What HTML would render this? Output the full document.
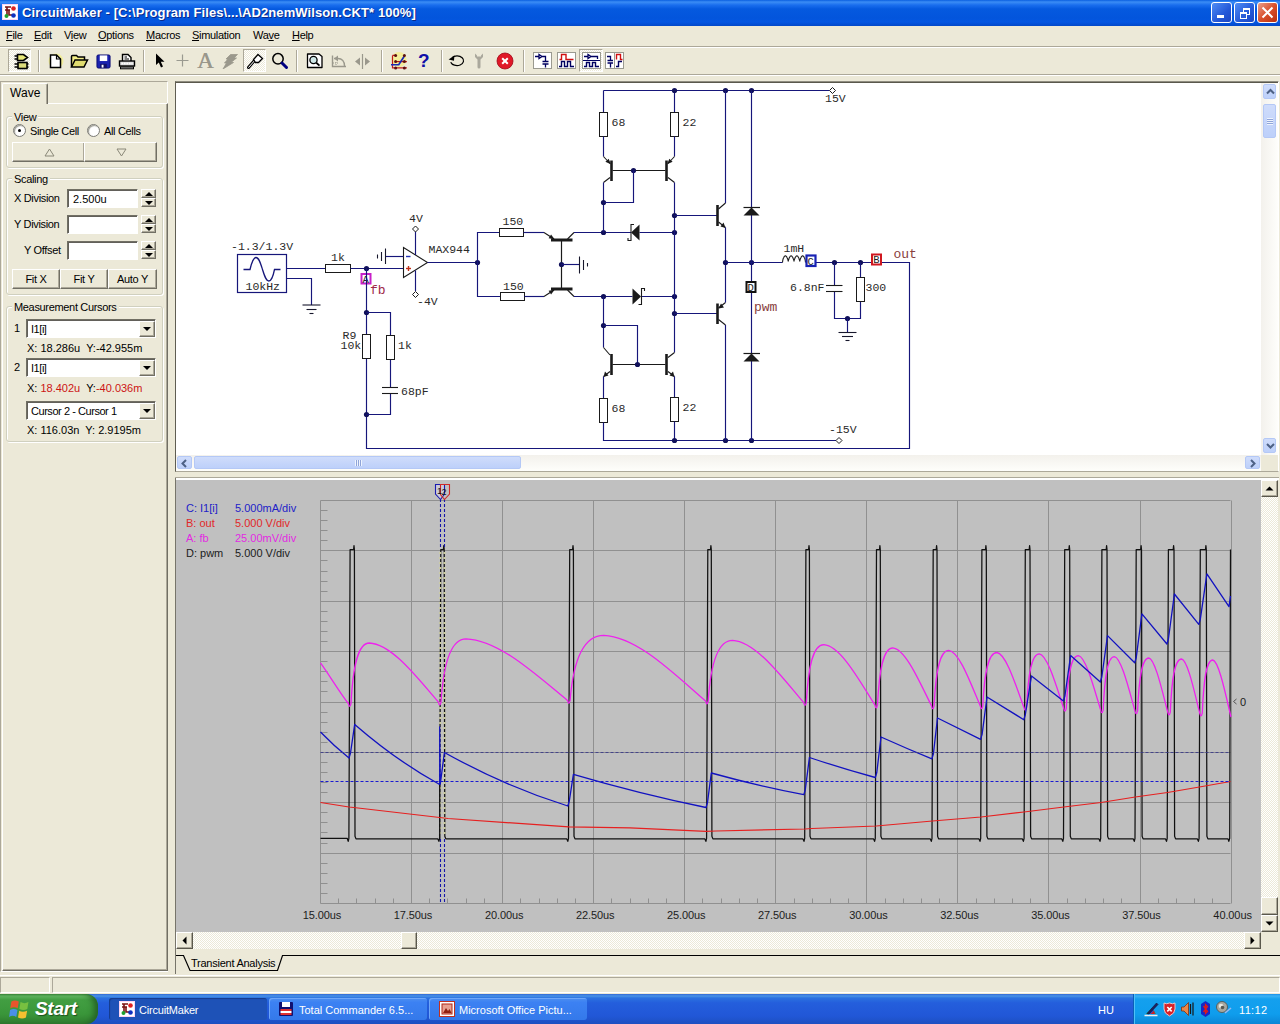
<!DOCTYPE html>
<html lang="en"><head><meta charset="utf-8"><title>CircuitMaker</title>
<style>
html,body{margin:0;padding:0;}
body{width:1280px;height:1024px;overflow:hidden;background:#ece9d8;position:relative;font-family:"Liberation Sans",sans-serif;font-size:11px;color:#000;}
.a{position:absolute;}
.t{position:absolute;white-space:nowrap;line-height:13px;height:13px;}
#title{left:0;top:0;width:1280px;height:26px;background:linear-gradient(#0a5fe0 0,#3b8df5 2px,#1a6eee 5px,#0559df 9px,#0355dc 18px,#0456e2 22px,#0349c9 26px);}
#title .tt{left:22px;top:5px;color:#fff;font-weight:bold;font-size:13px;line-height:15px;height:15px;letter-spacing:0.09px;text-shadow:1px 1px 0 #0a2a8a;}
.cb{position:absolute;top:2px;width:19px;height:19px;border:1px solid #fff;border-radius:3px;background:linear-gradient(135deg,#4f8df5,#2458d8 60%,#1c46c2);box-sizing:content-box;}
#menu{left:0;top:26px;width:1280px;height:20px;background:#ece9d8;}
#menu .t{top:3px;font-size:11px;letter-spacing:-0.3px;}
.ls{letter-spacing:-0.33px;}
u{text-decoration:underline;}
.hl{position:absolute;height:1px;}
.vl{position:absolute;width:1px;}
.sep{position:absolute;top:50px;width:1px;height:22px;background:#aca899;border-right:1px solid #fff;}
.grp{position:absolute;border:1px solid #d0d0bf;border-radius:3px;box-shadow:inset 1px 1px 0 #fff, 1px 1px 0 #fff;}
.grp>span{position:absolute;top:-6px;left:5px;letter-spacing:-0.33px;background:#ece9d8;padding:0 2px;line-height:13px;}
.btn{position:absolute;letter-spacing:-0.3px;background:#ece9d8;border:1px solid;border-color:#fff #716f64 #716f64 #fff;box-shadow:inset -1px -1px 0 #aca899;text-align:center;line-height:19px;box-sizing:border-box;}
.inp{position:absolute;background:#fff;border:1px solid;border-color:#716f64 #fff #fff #716f64;box-shadow:inset 1px 1px 0 #62605a;box-sizing:border-box;}
.spin{position:absolute;width:15px;height:9px;background:#ece9d8;border:1px solid;border-color:#fff #716f64 #716f64 #fff;box-shadow:inset -1px -1px 0 #aca899;box-sizing:border-box;}
.spin i{position:absolute;left:3px;top:2px;width:0;height:0;border-left:4px solid transparent;border-right:4px solid transparent;}
.spin i.up{border-bottom:4px solid #000;}
.spin i.dn{border-top:4px solid #000;}
.dd{position:absolute;width:16px;height:16px;background:#ece9d8;border:1px solid;border-color:#fff #716f64 #716f64 #fff;box-shadow:inset -1px -1px 0 #aca899;box-sizing:border-box;}
.dd i{position:absolute;left:3px;top:5px;width:0;height:0;border-left:4px solid transparent;border-right:4px solid transparent;border-top:4px solid #000;}
.radio{position:absolute;width:11px;height:11px;border-radius:50%;background:#fff;border:1px solid #7b7b75;box-shadow:inset 1px 1px 1px #9a9a90;box-sizing:content-box;}
.tb{position:absolute;top:994px;height:30px;}
.tk{position:absolute;top:998px;height:22px;border-radius:3px;color:#fff;font-size:11px;}
.tk span{position:absolute;top:6px;left:30px;white-space:nowrap;line-height:13px;}
.csb{position:absolute;background:#ece9d8;border:1px solid;border-color:#fff #5a584c #5a584c #fff;box-shadow:inset -1px -1px 0 #aca899;box-sizing:border-box;}
.xsb{position:absolute;box-sizing:border-box;border:1px solid #b4c8f6;border-radius:2px;background:linear-gradient(#cfdcfb,#bdd0fa);}
</style></head>
<body>
<div class="a" id="title">
<svg class="a" style="left:2px;top:4px" width="16" height="16" viewBox="0 0 16 16"><rect width="16" height="16" fill="#fbd5f3"/><rect x="1" y="1" width="14" height="14" fill="#fff"/><path d="M3 3H9M5 3V11M3 6H8M7 6V11H12" stroke="#7a1212" stroke-width="1.6" fill="none"/><circle cx="11.5" cy="4.5" r="2.3" fill="#e02020"/><circle cx="11.5" cy="11.5" r="2.3" fill="#1030c0"/><circle cx="4.5" cy="12" r="2" fill="#20a030"/></svg>
<div class="t tt">CircuitMaker - [C:\Program Files\...\AD2nemWilson.CKT* 100%]</div>
<div class="cb" style="left:1211px"><div class="a" style="left:5px;top:12px;width:7px;height:3px;background:#fff"></div></div>
<div class="cb" style="left:1234px"><div class="a" style="left:8px;top:5px;width:5px;height:4px;border:1px solid #fff;border-top-width:2px"></div><div class="a" style="left:5px;top:9px;width:5px;height:4px;border:1px solid #fff;border-top-width:2px;background:#2d5fd9"></div></div>
<div class="cb" style="left:1257px;background:linear-gradient(135deg,#e9a08c,#d9502c 50%,#b8300f)"><svg class="a" style="left:3px;top:3px" width="13" height="13"><path d="M1.500 1.500L11.500 11.500M11.500 1.500L1.500 11.500" stroke="#fff" stroke-width="2"/></svg></div>
</div>
<div class="a" id="menu">
<div class="t" style="left:6px"><u>F</u>ile</div>
<div class="t" style="left:34px"><u>E</u>dit</div>
<div class="t" style="left:64px">V<u>i</u>ew</div>
<div class="t" style="left:98px"><u>O</u>ptions</div>
<div class="t" style="left:146px"><u>M</u>acros</div>
<div class="t" style="left:192px"><u>S</u>imulation</div>
<div class="t" style="left:253px">Wa<u>v</u>e</div>
<div class="t" style="left:292px"><u>H</u>elp</div>
</div>
<div class="hl" style="left:0;top:46px;width:1280px;background:#aca899"></div>
<div class="hl" style="left:0;top:47px;width:1280px;background:#fff"></div>
<div class="hl" style="left:0;top:74px;width:1280px;background:#aca899"></div>
<div class="hl" style="left:0;top:75px;width:1280px;background:#fff"></div>
<div class="a" style="left:8px;top:49px;width:23px;height:23px;background:repeating-conic-gradient(#fff 0% 25%,#ece9d8 0% 50%) 0 0/2px 2px;border:1px solid;border-color:#aca899 #fff #fff #aca899;box-sizing:border-box"></div>
<svg class="a" style="left:8.5px;top:47px" width="24" height="24" viewBox="0 0 24 24"><path d="M8.5 7.5H14.5L18.5 10.5L14.5 13.5H8.5Z" fill="#e8e878" stroke="#000" stroke-width="1.6"/><path d="M5.500 9H9M5.500 12H9" stroke="#000" stroke-width="1.300"/><rect x="9" y="15.5" width="9" height="6" fill="#dcdc7c" stroke="#000" stroke-width="1.6"/><path d="M5.500 17H9M5.500 20H9M18 17H19.500M18 20H19.500" stroke="#000" stroke-width="1.300"/></svg>
<div class="sep" style="left:38px"></div>
<div class="sep" style="left:143px"></div>
<div class="sep" style="left:296px"></div>
<div class="sep" style="left:381px"></div>
<div class="sep" style="left:441px"></div>
<div class="sep" style="left:523px"></div>
<svg class="a" style="left:47px;top:52px" width="18" height="18" viewBox="0 0 18 18"><circle cx="9" cy="9" r="7.5" fill="#f5f06a" opacity=".55"/><path d="M3.5 3H9.5L13.5 7V15.5H3.5Z" fill="#fff" stroke="#000" stroke-width="1.5"/><path d="M9.5 3V7H13.5" fill="none" stroke="#000" stroke-width="1.2"/></svg>
<svg class="a" style="left:70px;top:52px" width="20" height="18" viewBox="0 0 20 18"><path d="M1.5 15V4.5Q1.5 3.5 2.5 3.5H6.5L8 5H14.5V8" fill="#f3ee86" stroke="#000" stroke-width="1.5"/><path d="M1.5 15L5 8H17.5L14 15Z" fill="#e0dc70" stroke="#000" stroke-width="1.5"/></svg>
<svg class="a" style="left:95.500px;top:53.500px" width="15" height="15" viewBox="0 0 16 16"><rect x="1" y="1" width="14" height="14" rx="1.500" fill="#1a22b0" stroke="#0a0a70" stroke-width="1"/><rect x="4" y="1.5" width="8" height="6" fill="#fff"/><rect x="4.5" y="10.5" width="7" height="4.5" fill="#10106a"/><rect x="6" y="11.5" width="2" height="3" fill="#fff"/></svg>
<svg class="a" style="left:118px;top:52px" width="18" height="18" viewBox="0 0 18 18"><path d="M4.5 9V2.5H10L13 5.5V9" fill="#fff" stroke="#000" stroke-width="1.4"/><path d="M6.5 5H9M6.5 7H11" stroke="#000" stroke-width="1"/><rect x="1.5" y="9" width="15" height="5" fill="#ddd" stroke="#000" stroke-width="1.4"/><path d="M3.5 11.5H14.5" stroke="#fff" stroke-width="1.4" stroke-dasharray="1.5 1"/><rect x="2.5" y="15" width="13" height="1.8" fill="#c8c8c8" stroke="#000" stroke-width="1"/></svg>
<svg class="a" style="left:154px;top:52px" width="14" height="18" viewBox="0 0 14 18"><path d="M2 1.5V13L4.8 10.5L7 15.5L9 14.6L6.8 9.8H10.5Z" fill="#000"/></svg>
<svg class="a" style="left:176px;top:54px" width="14" height="14"><path d="M6.5 0.5V12.5M0.5 6.5H12.5" stroke="#9a9a90" stroke-width="1.2"/></svg>
<div class="t" style="left:197px;top:49px;font-family:'Liberation Serif',serif;font-size:23px;line-height:24px;height:24px;color:#99978b;text-shadow:0.4px 0 0 #99978b">A</div>
<svg class="a" style="left:222px;top:53px" width="16" height="16" viewBox="0 0 16 16"><path d="M8.500 1.500H15.500L12 5H14.500L9 9.500H11.500L1 16L4.500 10H2.500L6 6H4Z" fill="#9a988c" stroke="#9a988c" stroke-width=".8" stroke-linejoin="round"/></svg>
<div class="a" style="left:243px;top:49px;width:23px;height:23px;background:repeating-conic-gradient(#fff 0% 25%,#ece9d8 0% 50%) 0 0/2px 2px;border:1px solid;border-color:#aca899 #fff #fff #aca899;box-sizing:border-box"></div>
<svg class="a" style="left:246px;top:52px" width="18" height="18" viewBox="0 0 18 18"><path d="M2.5 15.5L8.5 8.5" stroke="#000" stroke-width="3" stroke-linecap="round"/><path d="M2.7 15.3L8.5 8.7" stroke="#fff" stroke-width="1" stroke-linecap="round"/><path d="M7.5 7.5L12 2.5L16.5 6.5L12.5 10.5L9.5 10.5Z" fill="#fff" stroke="#000" stroke-width="1.3"/></svg>
<svg class="a" style="left:271px;top:52px" width="18" height="18" viewBox="0 0 18 18"><circle cx="7" cy="6.8" r="5.2" fill="none" stroke="#000" stroke-width="1.5"/><path d="M11 11L15.5 15.5" stroke="#000080" stroke-width="3" stroke-linecap="round"/></svg>
<svg class="a" style="left:306px;top:52px" width="18" height="18" viewBox="0 0 18 18"><path d="M1.500 2H13L16 4.500V15.500H1.500Z" fill="#fff" stroke="#000" stroke-width="1.300" stroke-linejoin="round"/><circle cx="7.5" cy="8" r="3.6" fill="#cfe8e8" stroke="#000" stroke-width="1.3"/><path d="M10.3 10.8L13.5 13.6" stroke="#000" stroke-width="1.8"/></svg>
<svg class="a" style="left:330px;top:53px" width="18" height="16" viewBox="0 0 18 16"><path d="M2.5 2.5V13.5H16" fill="none" stroke="#9a988c" stroke-width="1.4"/><path d="M4 5.5H8C12 5.5 14.5 8.5 14.5 13" fill="none" stroke="#9a988c" stroke-width="1.4"/><path d="M4 5.5L8 2.5V8.5Z" fill="#9a988c"/><path d="M6 9V13M3 10H8" stroke="#9a988c" stroke-width="1" stroke-dasharray="1 1"/></svg>
<svg class="a" style="left:354px;top:54px" width="18" height="16" viewBox="0 0 18 16"><path d="M8.5 0V15" stroke="#9a988c" stroke-width="1.2"/><path d="M6 3.5V11.5L1 7.5Z M11 3.5V11.5L16 7.5Z" fill="#9a988c"/></svg>
<svg class="a" style="left:389px;top:51px" width="20" height="20" viewBox="0 0 20 20"><circle cx="10" cy="8.500" r="7.500" fill="#f8f070" opacity=".6"/><path d="M3.500 4.400V16.900H17.900M6.600 10.600H17.900M3.500 4.400H6.600" fill="none" stroke="#c01818" stroke-width="1.200"/><path d="M2 13.750H9.750L15.400 5" fill="none" stroke="#1828b8" stroke-width="1.700"/><g fill="#5a1010"><circle cx="6.600" cy="4.400" r="1.500"/><circle cx="15.400" cy="4.400" r="1.500"/><circle cx="6.600" cy="10.600" r="1.500"/><circle cx="15.400" cy="10.600" r="1.500"/><circle cx="6.600" cy="16.900" r="1.500"/><circle cx="15.400" cy="16.900" r="1.500"/></g></svg>
<div class="t" style="left:418px;top:50px;font-size:19px;font-weight:bold;line-height:22px;height:22px;color:#1010a8">?</div>
<svg class="a" style="left:448px;top:53px" width="18" height="16" viewBox="0 0 18 16"><path d="M4 4.600A6.600 4.800 0 1 1 2.700 9.200" fill="none" stroke="#000" stroke-width="1.200"/><path d="M0.600 6.600L6.400 2.400L6 7.800Z" fill="#000"/></svg>
<svg class="a" style="left:473px;top:52px" width="12" height="18" viewBox="0 0 12 18"><path d="M2 1.5V5L4.5 7.5V15Q4.5 16.5 6 16.5Q7.5 16.5 7.5 15V7.5L10 5V1.5L8 3.5V4.5H4V3.5Z" fill="#aaa89c"/></svg>
<svg class="a" style="left:496px;top:52px" width="18" height="18" viewBox="0 0 18 18"><circle cx="9" cy="9" r="8" fill="#e01828"/><circle cx="9" cy="9" r="8" fill="none" stroke="#a00818" stroke-width=".8"/><path d="M6.2 6.2L11.8 11.8M11.8 6.2L6.2 11.8" stroke="#fff" stroke-width="2"/></svg>
<svg class="a" style="left:533px;top:52px" width="19" height="17" viewBox="0 0 19 17"><rect x=".5" y=".5" width="18" height="16" fill="#fff" stroke="#9a9a90"/><path d="M2 4.500H6M6 2.500V6.500L9 4.500ZM9 4.500H12.500V9.500M9.500 9.500H15.500M9.500 12H15.500M12.500 12V15.500" fill="none" stroke="#000060" stroke-width="1.3"/></svg>
<svg class="a" style="left:557px;top:52px" width="19" height="17" viewBox="0 0 19 17"><rect x=".5" y=".5" width="18" height="16" fill="#fff" stroke="#9a9a90"/><path d="M2.5 7.5H4.5V2.5H9V7.5H16.5" fill="none" stroke="#d01010" stroke-width="1.4"/><path d="M2 14.5H4.5V9.5H7.5V14.5H10.5V9.5H13.5V14.5H17" fill="none" stroke="#000060" stroke-width="1.4"/></svg>
<div class="a" style="left:579px;top:49px;width:24px;height:23px;background:repeating-conic-gradient(#fff 0% 25%,#ece9d8 0% 50%) 0 0/2px 2px;border:1px solid;border-color:#aca899 #fff #fff #aca899;box-sizing:border-box"></div>
<svg class="a" style="left:582px;top:52px" width="19" height="17" viewBox="0 0 19 17"><rect x=".5" y=".5" width="18" height="16" fill="#fff" stroke="#9a9a90"/><path d="M2 4.5H6M6 2.5V6.5L9 4.5ZM9 4.5H15.5V7" fill="none" stroke="#000060" stroke-width="1.3"/><path d="M1 8.5H18" stroke="#000060" stroke-width="1"/><path d="M2 14.5H4.5V10.5H7.5V14.5H10.5V10.5H13.5V14.5H17" fill="none" stroke="#000060" stroke-width="1.4"/></svg>
<svg class="a" style="left:605px;top:52px" width="19" height="17" viewBox="0 0 19 17"><rect x=".5" y=".5" width="18" height="16" fill="#fff" stroke="#9a9a90"/><path d="M9.5 1V16" stroke="#9a9a90" stroke-width="1"/><path d="M2 4.500H5.500V8.500M2.500 8.500H8M2.500 11H8M5.500 11V15.500" fill="none" stroke="#000060" stroke-width="1.3"/><path d="M11.500 7.500V2.500H15.500V7.500H17.500" fill="none" stroke="#d01010" stroke-width="1.4"/><path d="M11 14.500H13.500V9.500H17" fill="none" stroke="#000060" stroke-width="1.4"/></svg>
<div class="a" style="left:0;top:81px;width:168px;height:891px;box-sizing:border-box;border:1px solid;border-color:#aca899 #fff #fff #aca899;"></div>
<div class="a" style="left:2px;top:103px;width:166px;height:868px;box-sizing:border-box;border:1px solid;border-color:#fff #716f64 #716f64 #fff;box-shadow:inset -1px -1px 0 #aca899"></div>
<div class="a" style="left:2px;top:83px;width:46px;height:21px;box-sizing:border-box;background:#ece9d8;border:1px solid;border-color:#fff #716f64 transparent #fff;border-bottom:none;border-radius:2px 2px 0 0;box-shadow:inset -1px 0 0 #aca899"></div>
<div class="t" style="left:10px;top:87px;font-size:12px;letter-spacing:0.1px">Wave</div>
<div class="grp" style="left:6px;top:116px;width:155px;height:50px"><span>View</span></div>
<div class="radio" style="left:13px;top:124px"><div class="a" style="left:4px;top:4px;width:3px;height:3px;border-radius:50%;background:#000"></div></div>
<div class="t ls" style="left:30px;top:125px">Single Cell</div>
<div class="radio" style="left:87px;top:124px"></div>
<div class="t ls" style="left:104px;top:125px">All Cells</div>
<div class="btn" style="left:12px;top:142px;width:73px;height:20px"><svg class="a" style="left:31px;top:5px" width="11" height="9"><path d="M5.5 1L10 8H1Z" fill="none" stroke="#8a8878" stroke-width="1"/></svg></div>
<div class="btn" style="left:84px;top:142px;width:73px;height:20px"><svg class="a" style="left:31px;top:5px" width="11" height="9"><path d="M1 1H10L5.500 8Z" fill="none" stroke="#8a8878" stroke-width="1"/></svg></div>
<div class="grp" style="left:6px;top:178px;width:155px;height:115px"><span>Scaling</span></div>
<div class="t ls" style="left:14px;top:192px">X Division</div>
<div class="inp" style="left:67px;top:189px;width:71px;height:19px"><div class="t" style="left:5px;top:3px">2.500u</div></div>
<div class="spin" style="left:141px;top:189px"><i class="up"></i></div>
<div class="spin" style="left:141px;top:198px"><i class="dn"></i></div>
<div class="t ls" style="left:14px;top:218px">Y Division</div>
<div class="inp" style="left:67px;top:215px;width:71px;height:19px"><div class="t" style="left:5px;top:3px"></div></div>
<div class="spin" style="left:141px;top:215px"><i class="up"></i></div>
<div class="spin" style="left:141px;top:224px"><i class="dn"></i></div>
<div class="t ls" style="left:24px;top:244px">Y Offset</div>
<div class="inp" style="left:67px;top:241px;width:71px;height:19px"><div class="t" style="left:5px;top:3px"></div></div>
<div class="spin" style="left:141px;top:241px"><i class="up"></i></div>
<div class="spin" style="left:141px;top:250px"><i class="dn"></i></div>
<div class="btn" style="left:12px;top:269px;width:48px;height:20px">Fit X</div>
<div class="btn" style="left:60px;top:269px;width:48px;height:20px">Fit Y</div>
<div class="btn" style="left:108px;top:269px;width:49px;height:20px">Auto Y</div>
<div class="grp" style="left:6px;top:306px;width:155px;height:134px"><span>Measurement Cursors</span></div>
<div class="t" style="left:14px;top:322px">1</div>
<div class="t" style="left:14px;top:361px">2</div>
<div class="inp" style="left:26px;top:319px;width:130px;height:19px"><div class="t" style="left:4px;top:3px;letter-spacing:-0.45px">I1[i]</div><div class="dd" style="left:112px;top:1px"><i></i></div></div>
<div class="inp" style="left:26px;top:358px;width:130px;height:19px"><div class="t" style="left:4px;top:3px;letter-spacing:-0.45px">I1[i]</div><div class="dd" style="left:112px;top:1px"><i></i></div></div>
<div class="inp" style="left:26px;top:401px;width:130px;height:19px"><div class="t" style="left:4px;top:3px;letter-spacing:-0.45px">Cursor 2 - Cursor 1</div><div class="dd" style="left:112px;top:1px"><i></i></div></div>
<div class="t" style="left:27px;top:342px">X: 18.286u&nbsp; Y:-42.955m</div>
<div class="t" style="left:27px;top:382px">X: <span style="color:#cc1414">18.402u</span>&nbsp; Y:<span style="color:#cc1414">-40.036m</span></div>
<div class="t" style="left:27px;top:424px">X: 116.03n&nbsp; Y: 2.9195m</div>
<div class="a" style="left:175px;top:81px;width:1104px;height:391px;box-sizing:border-box;border:1px solid;border-color:#8f8d80 #fff #aca899 #5f5d52;box-shadow:inset 0 1px 0 #5a584c;background:#fff"></div>
<div class="a" style="left:1261px;top:83px;width:17px;height:372px;background:linear-gradient(90deg,#f3f1ec,#fefefb)"></div>
<div class="a" style="left:176px;top:455px;width:1085px;height:16px;background:linear-gradient(#f3f1ec,#fefefb)"></div>
<div class="a" style="left:1261px;top:455px;width:17px;height:16px;background:#ece9d8"></div>
<div class="xsb" style="left:1263px;top:84px;width:13px;height:15px"><svg class="a" style="left:1.5px;top:1.5px" width="9" height="9" viewBox="0 0 9 9"><path d="M1 6.500L4.500 3L8 6.500" fill="none" stroke="#4d6185" stroke-width="2"/></svg></div>
<div class="xsb" style="left:1263px;top:438px;width:13px;height:15px"><svg class="a" style="left:1.5px;top:1.5px" width="9" height="9" viewBox="0 0 9 9"><path d="M1 3L4.500 6.500L8 3" fill="none" stroke="#4d6185" stroke-width="2"/></svg></div>
<div class="xsb" style="left:1263px;top:104px;width:13px;height:34px"><div class="a" style="left:3px;top:13px;width:6px;height:7px;background:repeating-linear-gradient(#eef4fe 0 1px,#8fa4d8 1px 2px)"></div></div>
<div class="xsb" style="left:177px;top:456px;width:15px;height:13px"><svg class="a" style="left:1.5px;top:1.5px" width="9" height="9" viewBox="0 0 9 9"><path d="M6 1L2.500 4.500L6 8" fill="none" stroke="#4d6185" stroke-width="2"/></svg></div>
<div class="xsb" style="left:1245px;top:456px;width:15px;height:13px"><svg class="a" style="left:1.5px;top:1.5px" width="9" height="9" viewBox="0 0 9 9"><path d="M3 1L6.500 4.500L3 8" fill="none" stroke="#4d6185" stroke-width="2"/></svg></div>
<div class="xsb" style="left:194px;top:456px;width:327px;height:13px;background:linear-gradient(#cfdcfb,#bdd0fa)"><div class="a" style="left:160px;top:3px;width:7px;height:6px;background:repeating-linear-gradient(90deg,#eef4fe 0 1px,#8fa4d8 1px 2px)"></div></div>
<div class="hl" style="left:175px;top:477px;width:1104px;background:#aca899"></div>
<div class="hl" style="left:175px;top:478px;width:1104px;height:2px;background:#fff"></div>
<div class="a" style="left:175px;top:478px;width:1px;height:496px;background:#77756a"></div>
<div class="a" style="left:176px;top:480px;width:1085px;height:452px;background:#c0c0c0"></div>
<div class="a" style="left:1261px;top:480px;width:17px;height:452px;background:repeating-conic-gradient(#fff 0% 25%,#ece9d8 0% 50%) 0 0/2px 2px;"></div>
<div class="csb" style="left:1261px;top:480px;width:17px;height:17px"><svg class="a" style="left:3px;top:4px" width="9" height="7" viewBox="0 0 9 7"><path d="M0.500 5.500H8.500L4.500 1.500Z" fill="#000"/></svg></div>
<div class="csb" style="left:1261px;top:915px;width:17px;height:17px"><svg class="a" style="left:3px;top:4px" width="9" height="7" viewBox="0 0 9 7"><path d="M0.500 1.500H8.500L4.500 5.500Z" fill="#000"/></svg></div>
<div class="csb" style="left:1261px;top:897px;width:17px;height:18px"></div>
<div class="a" style="left:176px;top:932px;width:1085px;height:17px;background:repeating-conic-gradient(#fff 0% 25%,#ece9d8 0% 50%) 0 0/2px 2px;"></div>
<div class="csb" style="left:176px;top:932px;width:17px;height:17px"><svg class="a" style="left:4px;top:3px" width="7" height="9" viewBox="0 0 7 9"><path d="M5.500 0.500V8.500L1.500 4.500Z" fill="#000"/></svg></div>
<div class="csb" style="left:1244px;top:932px;width:17px;height:17px"><svg class="a" style="left:4px;top:3px" width="7" height="9" viewBox="0 0 7 9"><path d="M1.500 0.500V8.500L5.500 4.500Z" fill="#000"/></svg></div>
<div class="csb" style="left:401px;top:932px;width:16px;height:17px"></div>
<div class="a" style="left:1261px;top:932px;width:17px;height:17px;background:#ece9d8"></div>
<div class="a" style="left:176px;top:949px;width:1104px;height:24px;background:#ece9d8"></div>
<svg class="a" style="left:176px;top:950px" width="1104" height="24"><path d="M0 5.500H7.500L14 20.500H101.500L106.500 5.500H1104" fill="none" stroke="#000" stroke-width="1.2"/></svg>
<div class="t" style="left:191px;top:957px;font-size:11px;letter-spacing:-0.25px">Transient Analysis</div>
<div class="hl" style="left:0;top:975px;width:1280px;background:#fff"></div>
<div class="a" style="left:0px;top:977px;width:50px;height:16px;box-sizing:border-box;border:1px solid;border-color:#aca899 #fff #fff #aca899"></div>
<div class="a" style="left:52px;top:977px;width:1228px;height:16px;box-sizing:border-box;border:1px solid;border-color:#aca899 #fff #fff #aca899"></div>
<svg class="a" style="left:176px;top:83px" width="1085" height="372" viewBox="176 83 1085 372" font-family="'Liberation Mono',monospace" font-size="11.5">
<rect x="237.5" y="254.5" width="49" height="38" fill="#fff" stroke="#1a1a1a" stroke-width="1"/>
<rect x="237.500" y="254.500" width="49" height="38" fill="none" stroke="#16167a" stroke-width="1.200"/>
<path d="M243.500 269.500H250C252 261 254 257.500 256 257.500C259 257.500 260.500 263 262.500 269.500C264.500 276 266 281 268.800 281C271 281 273 277 274.500 269.500H280.500" fill="none" stroke="#16167a" stroke-width="1.300"/>
<text x="231" y="250" fill="#2a2a2a">-1.3/1.3V</text>
<text x="245.5" y="289.5" fill="#2a2a2a">10kHz</text>
<polyline points="286.5,268.5 325,268.5" fill="none" stroke="#16167a" stroke-width="1.15"/>
<polyline points="286.5,278.5 311.5,278.5 311.5,305" fill="none" stroke="#16167a" stroke-width="1.15"/>
<polyline points="302.5,305 320.5,305" fill="none" stroke="#17172c" stroke-width="1.1"/>
<polyline points="306.5,309.5 316.5,309.5" fill="none" stroke="#17172c" stroke-width="1.1"/>
<polyline points="309.5,313.5 313.5,313.5" fill="none" stroke="#17172c" stroke-width="1.1"/>
<rect x="325.5" y="264.5" width="25" height="8" fill="#fff" stroke="#1a1a1a" stroke-width="1"/>
<text x="331" y="261" fill="#2a2a2a">1k</text>
<polyline points="350.5,268.5 403,268.5" fill="none" stroke="#16167a" stroke-width="1.15"/>
<circle cx="366.5" cy="268.5" r="2.6" fill="#10105a"/>
<rect x="361.500" y="274" width="9" height="9.500" fill="#fff" stroke="#c820c8" stroke-width="2"/>
<text x="362.6" y="282.6" fill="#222" font-size="10.5">A</text>
<text x="370" y="294" fill="#a02848" font-size="13">fb</text>
<polyline points="366.5,268.5 366.5,334.5" fill="none" stroke="#16167a" stroke-width="1.15"/>
<polyline points="366.5,358.5 366.5,448.5 909.5,448.5 909.5,262.5 882,262.5" fill="none" stroke="#16167a" stroke-width="1.15"/>
<circle cx="366.5" cy="312.5" r="2.6" fill="#10105a"/>
<circle cx="366.5" cy="414.5" r="2.6" fill="#10105a"/>
<polyline points="366.5,312.5 390.5,312.5 390.5,335" fill="none" stroke="#16167a" stroke-width="1.15"/>
<polyline points="390.5,359.5 390.5,387" fill="none" stroke="#16167a" stroke-width="1.15"/>
<polyline points="390.5,393 390.5,414.5 366.5,414.5" fill="none" stroke="#16167a" stroke-width="1.15"/>
<rect x="362.5" y="334.5" width="8" height="24" fill="#fff" stroke="#1a1a1a" stroke-width="1"/>
<rect x="386.5" y="335.5" width="8" height="24" fill="#fff" stroke="#1a1a1a" stroke-width="1"/>
<polyline points="382,387.5 398,387.5" fill="none" stroke="#1a1a1a" stroke-width="1.1"/>
<polyline points="382,393.5 398,393.5" fill="none" stroke="#1a1a1a" stroke-width="1.1"/>
<text x="342.5" y="338.5" fill="#2a2a2a">R9</text>
<text x="340.5" y="349" fill="#2a2a2a">10k</text>
<text x="398" y="349" fill="#2a2a2a">1k</text>
<text x="401" y="394.5" fill="#2a2a2a">68pF</text>
<path d="M403.500 247.500V277.500L427.500 262.500Z" fill="#fff" stroke="#1a1a1a" stroke-width="1.100"/>
<polyline points="406,256.5 410.5,256.5" fill="none" stroke="#2030b0" stroke-width="1.4"/>
<polyline points="406,268.5 411,268.5" fill="none" stroke="#c03018" stroke-width="1.4"/>
<polyline points="408.5,266 408.5,271" fill="none" stroke="#c03018" stroke-width="1.4"/>
<polyline points="415.5,232 415.5,255" fill="none" stroke="#16167a" stroke-width="1.15"/>
<polyline points="415.5,270.5 415.5,291" fill="none" stroke="#16167a" stroke-width="1.15"/>
<path d="M412.5 229L415.5 226L418.5 229L415.5 232Z" fill="#fff" stroke="#1a1a1a" stroke-width="1"/>
<path d="M412.5 294.5L415.5 291.5L418.5 294.5L415.5 297.5Z" fill="#fff" stroke="#1a1a1a" stroke-width="1"/>
<text x="409" y="222" fill="#2a2a2a">4V</text>
<text x="417" y="304.5" fill="#2a2a2a">-4V</text>
<text x="428.5" y="252.5" fill="#2a2a2a">MAX944</text>
<polyline points="385.5,256.5 403.5,256.5" fill="none" stroke="#16167a" stroke-width="1.15"/>
<polyline points="385.5,248.5 385.5,264" fill="none" stroke="#17172c" stroke-width="1.1"/>
<polyline points="381.5,252 381.5,261" fill="none" stroke="#17172c" stroke-width="1.1"/>
<polyline points="377.5,254.5 377.5,258.5" fill="none" stroke="#17172c" stroke-width="1.1"/>
<polyline points="427.5,262.5 477.5,262.5" fill="none" stroke="#16167a" stroke-width="1.15"/>
<circle cx="477.5" cy="262.5" r="2.6" fill="#10105a"/>
<polyline points="499.5,232.5 477.5,232.5 477.5,296.5 500,296.5" fill="none" stroke="#16167a" stroke-width="1.15"/>
<rect x="499.5" y="228.5" width="24" height="8" fill="#fff" stroke="#1a1a1a" stroke-width="1"/>
<rect x="500.5" y="292.5" width="24" height="8" fill="#fff" stroke="#1a1a1a" stroke-width="1"/>
<text x="502.5" y="225" fill="#2a2a2a">150</text>
<text x="503" y="289.5" fill="#2a2a2a">150</text>
<polyline points="523.5,232.5 544,232.5" fill="none" stroke="#16167a" stroke-width="1.15"/>
<polyline points="524.5,296.5 544,296.5" fill="none" stroke="#16167a" stroke-width="1.15"/>
<polyline points="551,240 572.5,240" fill="none" stroke="#1a1a1a" stroke-width="3"/>
<polyline points="551,289 572.5,289" fill="none" stroke="#1a1a1a" stroke-width="3"/>
<polyline points="544,232.5 554,239" fill="none" stroke="#1a1a1a" stroke-width="1.1"/>
<polyline points="567.5,239 574,232.5" fill="none" stroke="#1a1a1a" stroke-width="1.1"/>
<polyline points="544,296.5 554,290" fill="none" stroke="#1a1a1a" stroke-width="1.1"/>
<polyline points="567.5,290 574,296.5" fill="none" stroke="#1a1a1a" stroke-width="1.1"/>
<path d="M554.500 239.300L548.600 238.200L551.100 234.400Z" fill="#1a1a1a"/>
<path d="M554.500 289.700L548.600 290.800L551.100 294.600Z" fill="#1a1a1a"/>
<polyline points="561.5,241 561.5,288" fill="none" stroke="#1a1a1a" stroke-width="1.2"/>
<circle cx="561.5" cy="264.5" r="2.6" fill="#10105a"/>
<polyline points="561.5,264.5 579.5,264.5" fill="none" stroke="#16167a" stroke-width="1.15"/>
<polyline points="579.5,256.5 579.5,273.5" fill="none" stroke="#17172c" stroke-width="1.1"/>
<polyline points="583.5,260 583.5,270" fill="none" stroke="#17172c" stroke-width="1.1"/>
<polyline points="587.5,263 587.5,266.5" fill="none" stroke="#17172c" stroke-width="1.1"/>
<polyline points="574,232.5 631,232.5" fill="none" stroke="#16167a" stroke-width="1.15"/>
<polyline points="639.5,232.5 674.5,232.5" fill="none" stroke="#16167a" stroke-width="1.15"/>
<polyline points="574,296.5 632.5,296.5" fill="none" stroke="#16167a" stroke-width="1.15"/>
<polyline points="641,296.5 674.5,296.5" fill="none" stroke="#16167a" stroke-width="1.15"/>
<circle cx="603.5" cy="232.5" r="2.6" fill="#10105a"/>
<circle cx="603.5" cy="296.5" r="2.6" fill="#10105a"/>
<circle cx="674.5" cy="232.5" r="2.6" fill="#10105a"/>
<circle cx="674.5" cy="296.5" r="2.6" fill="#10105a"/>
<path d="M631 232.500L639.500 224.500V240.500Z" fill="#1a1a1a"/>
<polyline points="634,224.5 631,224.5 631,240.5 628,240.5 628,238" fill="none" stroke="#1a1a1a" stroke-width="1.1"/>
<path d="M641 296.500L632.500 288.500V304.500Z" fill="#1a1a1a"/>
<polyline points="644.5,291 644.5,288.5 641.5,288.5 641.5,304.5 638.5,304.5" fill="none" stroke="#1a1a1a" stroke-width="1.1"/>
<polyline points="603.5,90.5 829.5,90.5" fill="none" stroke="#16167a" stroke-width="1.15"/>
<polyline points="603.5,90.5 603.5,112.5" fill="none" stroke="#16167a" stroke-width="1.15"/>
<polyline points="674.5,90.5 674.5,112.5" fill="none" stroke="#16167a" stroke-width="1.15"/>
<circle cx="674.5" cy="90.5" r="2.6" fill="#10105a"/>
<circle cx="725.5" cy="90.5" r="2.6" fill="#10105a"/>
<circle cx="751.5" cy="90.5" r="2.6" fill="#10105a"/>
<path d="M829.5 90.5L832.5 87.5L835.5 90.5L832.5 93.5Z" fill="#fff" stroke="#1a1a1a" stroke-width="1"/>
<text x="825" y="101.5" fill="#2a2a2a">15V</text>
<rect x="599.5" y="112.5" width="8" height="24" fill="#fff" stroke="#1a1a1a" stroke-width="1"/>
<rect x="670.5" y="112.5" width="8" height="24" fill="#fff" stroke="#1a1a1a" stroke-width="1"/>
<text x="611.5" y="125.5" fill="#2a2a2a">68</text>
<text x="682.5" y="125.5" fill="#2a2a2a">22</text>
<polyline points="603.5,136.5 603.5,156.5" fill="none" stroke="#16167a" stroke-width="1.15"/>
<polyline points="674.5,136.5 674.5,156.5" fill="none" stroke="#16167a" stroke-width="1.15"/>
<polyline points="611.5,160.5 611.5,181" fill="none" stroke="#1a1a1a" stroke-width="2.6"/>
<polyline points="666.5,160.5 666.5,181" fill="none" stroke="#1a1a1a" stroke-width="2.6"/>
<polyline points="603.5,156.5 610,163.5" fill="none" stroke="#1a1a1a" stroke-width="1.1"/>
<polyline points="610,177.5 603.5,182.5" fill="none" stroke="#1a1a1a" stroke-width="1.1"/>
<polyline points="674.5,156.5 668,163.5" fill="none" stroke="#1a1a1a" stroke-width="1.1"/>
<polyline points="668,177.5 674.5,182.5" fill="none" stroke="#1a1a1a" stroke-width="1.1"/>
<path d="M610.800 164.300L605.400 161.800L608.750 158.700Z" fill="#1a1a1a"/>
<path d="M667.200 164.300L672.600 161.800L669.250 158.700Z" fill="#1a1a1a"/>
<polyline points="612.5,170.5 665.5,170.5" fill="none" stroke="#1a1a1a" stroke-width="1.2"/>
<circle cx="633.5" cy="170.5" r="2.6" fill="#10105a"/>
<polyline points="603.5,182.5 603.5,232.5" fill="none" stroke="#16167a" stroke-width="1.15"/>
<circle cx="603.5" cy="202.5" r="2.6" fill="#10105a"/>
<polyline points="603.5,202.5 633.5,202.5 633.5,170.5" fill="none" stroke="#16167a" stroke-width="1.15"/>
<polyline points="674.5,182.5 674.5,352.5" fill="none" stroke="#16167a" stroke-width="1.15"/>
<circle cx="674.5" cy="215.5" r="2.6" fill="#10105a"/>
<circle cx="674.5" cy="313.5" r="2.6" fill="#10105a"/>
<polyline points="603.5,296.5 603.5,347.5" fill="none" stroke="#16167a" stroke-width="1.15"/>
<circle cx="603.5" cy="325.5" r="2.6" fill="#10105a"/>
<polyline points="603.5,325.5 637.5,325.5 637.5,364.5" fill="none" stroke="#16167a" stroke-width="1.15"/>
<polyline points="611.5,354 611.5,375" fill="none" stroke="#1a1a1a" stroke-width="2.6"/>
<polyline points="666.5,354 666.5,375" fill="none" stroke="#1a1a1a" stroke-width="2.6"/>
<polyline points="603.5,347.5 610,355" fill="none" stroke="#1a1a1a" stroke-width="1.1"/>
<polyline points="610,371.5 603.5,376.5" fill="none" stroke="#1a1a1a" stroke-width="1.1"/>
<polyline points="674.5,352.5 668,357.5" fill="none" stroke="#1a1a1a" stroke-width="1.1"/>
<polyline points="668,371.5 674.5,376.5" fill="none" stroke="#1a1a1a" stroke-width="1.1"/>
<path d="M603.500 377L605 371.500L608.500 375.500Z" fill="#1a1a1a"/>
<path d="M674.500 377L673 371.500L669.500 375.500Z" fill="#1a1a1a"/>
<polyline points="612.5,364.5 665.5,364.5" fill="none" stroke="#1a1a1a" stroke-width="1.2"/>
<circle cx="637.5" cy="364.5" r="2.6" fill="#10105a"/>
<polyline points="603.5,376.5 603.5,398.5" fill="none" stroke="#16167a" stroke-width="1.15"/>
<polyline points="674.5,376.5 674.5,397" fill="none" stroke="#16167a" stroke-width="1.15"/>
<rect x="599.5" y="398.5" width="8" height="24" fill="#fff" stroke="#1a1a1a" stroke-width="1"/>
<rect x="670.5" y="397.5" width="8" height="24" fill="#fff" stroke="#1a1a1a" stroke-width="1"/>
<text x="611.5" y="411.5" fill="#2a2a2a">68</text>
<text x="682.5" y="410.5" fill="#2a2a2a">22</text>
<polyline points="603.5,422.5 603.5,440.5 836,440.5" fill="none" stroke="#16167a" stroke-width="1.15"/>
<polyline points="674.5,421.5 674.5,440.5" fill="none" stroke="#16167a" stroke-width="1.15"/>
<circle cx="674.5" cy="440.5" r="2.6" fill="#10105a"/>
<circle cx="725.5" cy="440.5" r="2.6" fill="#10105a"/>
<circle cx="751.5" cy="440.5" r="2.6" fill="#10105a"/>
<path d="M836 440.5L839 437.5L842 440.5L839 443.5Z" fill="#fff" stroke="#1a1a1a" stroke-width="1"/>
<text x="829" y="433" fill="#2a2a2a">-15V</text>
<polyline points="674.5,215.5 717,215.5" fill="none" stroke="#16167a" stroke-width="1.15"/>
<polyline points="674.5,313.5 717,313.5" fill="none" stroke="#16167a" stroke-width="1.15"/>
<polyline points="717.5,205 717.5,226" fill="none" stroke="#1a1a1a" stroke-width="2.6"/>
<polyline points="717.5,303.5 717.5,324" fill="none" stroke="#1a1a1a" stroke-width="2.6"/>
<polyline points="718.5,209 725.5,203" fill="none" stroke="#1a1a1a" stroke-width="1.1"/>
<polyline points="718.5,222 725.5,227.5" fill="none" stroke="#1a1a1a" stroke-width="1.1"/>
<polyline points="725.5,302.5 718.5,308" fill="none" stroke="#1a1a1a" stroke-width="1.1"/>
<polyline points="718.5,319.5 725.5,325" fill="none" stroke="#1a1a1a" stroke-width="1.1"/>
<path d="M725.500 228L720.500 226.500L723.500 222.500Z" fill="#1a1a1a"/>
<path d="M718.500 308.500L724 307.500L721 303.500Z" fill="#1a1a1a"/>
<polyline points="725.5,90.5 725.5,203" fill="none" stroke="#16167a" stroke-width="1.15"/>
<polyline points="725.5,227.5 725.5,302.5" fill="none" stroke="#16167a" stroke-width="1.15"/>
<polyline points="725.5,325 725.5,440.5" fill="none" stroke="#16167a" stroke-width="1.15"/>
<circle cx="725.5" cy="262.5" r="2.6" fill="#10105a"/>
<circle cx="751.5" cy="262.5" r="2.6" fill="#10105a"/>
<polyline points="751.5,90.5 751.5,440.5" fill="none" stroke="#16167a" stroke-width="1.15"/>
<path d="M751.500 207.500L743.500 215.500H759.500Z" fill="#1a1a1a"/>
<polyline points="743.5,207.5 760,207.5" fill="none" stroke="#1a1a1a" stroke-width="1.2"/>
<path d="M751.500 353.500L743.500 361.500H759.500Z" fill="#1a1a1a"/>
<polyline points="743.5,353.5 760,353.5" fill="none" stroke="#1a1a1a" stroke-width="1.2"/>
<rect x="746.500" y="282" width="9" height="10" fill="#fff" stroke="#111" stroke-width="2"/>
<text x="747.6" y="290.8" fill="#222" font-size="10.5">D</text>
<text x="754" y="311" fill="#884040" font-size="13">pwm</text>
<polyline points="725.5,262.5 782.5,262.5" fill="none" stroke="#16167a" stroke-width="1.15"/>
<polyline points="782.5,262.5 782.8,260.1 783.0,259.3 783.2,258.6 783.5,258.0 783.8,257.5 784.0,257.0 784.2,256.6 784.5,256.3 784.8,256.1 785.0,255.9 785.2,255.8 785.5,255.8 785.8,255.9 786.0,256.1 786.2,256.3 786.5,256.6 786.8,257.0 787.0,257.5 787.2,258.0 787.5,258.6 787.8,259.3 788.0,260.1 788.2,261.2 788.5,260.1 788.8,259.3 789.0,258.6 789.2,258.0 789.5,257.5 789.8,257.0 790.0,256.6 790.2,256.3 790.5,256.1 790.8,255.9 791.0,255.8 791.2,255.8 791.5,255.9 791.8,256.1 792.0,256.3 792.2,256.6 792.5,257.0 792.8,257.5 793.0,258.0 793.2,258.6 793.5,259.3 793.8,260.1 794.0,261.2 794.2,260.1 794.5,259.3 794.8,258.6 795.0,258.0 795.2,257.5 795.5,257.0 795.8,256.6 796.0,256.3 796.2,256.1 796.5,255.9 796.8,255.8 797.0,255.8 797.2,255.9 797.5,256.1 797.8,256.3 798.0,256.6 798.2,257.0 798.5,257.5 798.8,258.0 799.0,258.6 799.2,259.3 799.5,260.1 799.8,261.2 800.0,260.1 800.2,259.3 800.5,258.6 800.8,258.0 801.0,257.5 801.2,257.0 801.5,256.6 801.8,256.3 802.0,256.1 802.2,255.9 802.5,255.8 802.8,255.8 803.0,255.9 803.2,256.1 803.5,256.3 803.8,256.6 804.0,257.0 804.2,257.5 804.5,258.0 804.8,258.6 805.0,259.3 805.2,260.1 805.5,262.5" fill="none" stroke="#1a1a1a" stroke-width="1.100" stroke-linejoin="round"/>
<text x="783.5" y="252" fill="#2a2a2a">1mH</text>
<polyline points="815.5,262.5 871,262.5" fill="none" stroke="#16167a" stroke-width="1.15"/>
<rect x="806.500" y="255.500" width="9" height="10.500" fill="#fff" stroke="#1822b4" stroke-width="2.200"/>
<text x="807.6" y="264.8" fill="#222" font-size="10.5">C</text>
<rect x="872" y="254.500" width="9" height="10" fill="#fff" stroke="#d01820" stroke-width="2"/>
<text x="873.2" y="263.3" fill="#222" font-size="10.5">B</text>
<text x="893.5" y="257.5" fill="#884040" font-size="13">out</text>
<circle cx="834.5" cy="262.5" r="2.6" fill="#10105a"/>
<circle cx="860.5" cy="262.5" r="2.6" fill="#10105a"/>
<polyline points="834.5,262.5 834.5,285.5" fill="none" stroke="#16167a" stroke-width="1.15"/>
<polyline points="834.5,291.5 834.5,318.5 860.5,318.5 860.5,301.5" fill="none" stroke="#16167a" stroke-width="1.15"/>
<polyline points="860.5,262.5 860.5,277.5" fill="none" stroke="#16167a" stroke-width="1.15"/>
<polyline points="826,285.5 842.5,285.5" fill="none" stroke="#1a1a1a" stroke-width="1.1"/>
<polyline points="826,291.5 842.5,291.5" fill="none" stroke="#1a1a1a" stroke-width="1.1"/>
<rect x="856.5" y="277.5" width="8" height="24" fill="#fff" stroke="#1a1a1a" stroke-width="1"/>
<text x="790" y="290.5" fill="#2a2a2a">6.8nF</text>
<text x="865.5" y="290.5" fill="#2a2a2a">300</text>
<circle cx="847.5" cy="318.5" r="2.6" fill="#10105a"/>
<polyline points="847.5,318.5 847.5,332.5" fill="none" stroke="#16167a" stroke-width="1.15"/>
<polyline points="838.5,332.5 856.5,332.5" fill="none" stroke="#17172c" stroke-width="1.1"/>
<polyline points="842,336.5 853,336.5" fill="none" stroke="#17172c" stroke-width="1.1"/>
<polyline points="845.5,340.5 849.5,340.5" fill="none" stroke="#17172c" stroke-width="1.1"/>
</svg>
<svg class="a" style="left:176px;top:479px" width="1085" height="453" viewBox="176 479 1085 453" font-family="'Liberation Sans',sans-serif" font-size="11">
<path d="M320.5 500.5V903.5M411.5 500.5V903.5M502.5 500.5V903.5M593.5 500.5V903.5M684.5 500.5V903.5M775.5 500.5V903.5M866.5 500.5V903.5M957.5 500.5V903.5M1048.5 500.5V903.5M1140.5 500.5V903.5M1231.5 500.5V903.5M320.5 500.5H1230.5M320.5 550.5H1230.5M320.5 601.5H1230.5M320.5 651.5H1230.5M320.5 702.5H1230.5M320.5 752.5H1230.5M320.5 802.5H1230.5M320.5 853.5H1230.5M320.5 903.5H1230.5" stroke="#909090" stroke-width="1" fill="none"/>
<path d="M320.5 510.5H327.5M320.5 520.5H327.5M320.5 530.5H327.5M320.5 540.5H327.5M320.5 560.5H327.5M320.5 571.5H327.5M320.5 581.5H327.5M320.5 591.5H327.5M320.5 611.5H327.5M320.5 621.5H327.5M320.5 631.5H327.5M320.5 641.5H327.5M320.5 661.5H327.5M320.5 671.5H327.5M320.5 681.5H327.5M320.5 691.5H327.5M320.5 712.5H327.5M320.5 722.5H327.5M320.5 732.5H327.5M320.5 742.5H327.5M320.5 762.5H327.5M320.5 772.5H327.5M320.5 782.5H327.5M320.5 792.5H327.5M320.5 812.5H327.5M320.5 822.5H327.5M320.5 832.5H327.5M320.5 843.5H327.5M320.5 863.5H327.5M320.5 873.5H327.5M320.5 883.5H327.5M320.5 893.5H327.5M338.5 903.5V898.5M356.5 903.5V898.5M375.5 903.5V898.5M393.5 903.5V898.5M429.5 903.5V898.5M447.5 903.5V898.5M466.5 903.5V898.5M484.5 903.5V898.5M520.5 903.5V898.5M539.5 903.5V898.5M557.5 903.5V898.5M575.5 903.5V898.5M611.5 903.5V898.5M630.5 903.5V898.5M648.5 903.5V898.5M666.5 903.5V898.5M702.5 903.5V898.5M721.5 903.5V898.5M739.5 903.5V898.5M757.5 903.5V898.5M794.5 903.5V898.5M812.5 903.5V898.5M830.5 903.5V898.5M848.5 903.5V898.5M885.5 903.5V898.5M903.5 903.5V898.5M921.5 903.5V898.5M939.5 903.5V898.5M976.5 903.5V898.5M994.5 903.5V898.5M1012.5 903.5V898.5M1030.5 903.5V898.5M1067.5 903.5V898.5M1085.5 903.5V898.5M1103.5 903.5V898.5M1121.5 903.5V898.5M1158.5 903.5V898.5M1176.5 903.5V898.5M1194.5 903.5V898.5M1212.5 903.5V898.5" stroke="#8f8f8f" stroke-width="1" fill="none"/>
<text x="322" y="919" text-anchor="middle" fill="#1c1c1c" letter-spacing="-0.1">15.00us</text>
<text x="413.06" y="919" text-anchor="middle" fill="#1c1c1c" letter-spacing="-0.1">17.50us</text>
<text x="504.12" y="919" text-anchor="middle" fill="#1c1c1c" letter-spacing="-0.1">20.00us</text>
<text x="595.18" y="919" text-anchor="middle" fill="#1c1c1c" letter-spacing="-0.1">22.50us</text>
<text x="686.24" y="919" text-anchor="middle" fill="#1c1c1c" letter-spacing="-0.1">25.00us</text>
<text x="777.3" y="919" text-anchor="middle" fill="#1c1c1c" letter-spacing="-0.1">27.50us</text>
<text x="868.36" y="919" text-anchor="middle" fill="#1c1c1c" letter-spacing="-0.1">30.00us</text>
<text x="959.42" y="919" text-anchor="middle" fill="#1c1c1c" letter-spacing="-0.1">32.50us</text>
<text x="1050.48" y="919" text-anchor="middle" fill="#1c1c1c" letter-spacing="-0.1">35.00us</text>
<text x="1141.54" y="919" text-anchor="middle" fill="#1c1c1c" letter-spacing="-0.1">37.50us</text>
<text x="1232.6" y="919" text-anchor="middle" fill="#1c1c1c" letter-spacing="-0.1">40.00us</text>
<text x="186" y="512" fill="#2222c8">C: I1[i]</text><text x="235" y="512" fill="#2222c8">5.000mA/div</text>
<text x="186" y="527" fill="#e02828">B: out</text><text x="235" y="527" fill="#e02828">5.000 V/div</text>
<text x="186" y="542" fill="#e22ae2">A: fb</text><text x="235" y="542" fill="#e22ae2">25.00mV/div</text>
<text x="186" y="557" fill="#1c1c1c">D: pwm</text><text x="235" y="557" fill="#1c1c1c">5.000 V/div</text>
<path d="M320.5 838.3H347.2 L348.2 841.3 L348.9 838.3 L350.1 549.6 H353.6 L354 545.6 L354.4 549.6 L355 836.3 L356 838.9H437.9 L438.9 841.3 L439.6 838.3 L440.8 549.6 H443.4 L443.8 545.6 L444.2 549.6 L444.8 836.3 L445.8 838.9H566.8 L567.8 841.3 L568.5 838.3 L569.7 549.6 H572.6 L573 545.6 L573.4 549.6 L574 836.3 L575 838.9H704.9 L705.9 841.3 L706.6 838.3 L707.8 549.6 H710.5 L710.9 545.6 L711.3 549.6 L711.9 836.3 L712.9 838.9H803 L804 841.3 L804.7 838.3 L805.9 549.6 H808.6 L809 545.6 L809.4 549.6 L810 836.3 L811 838.9H873.6 L874.6 841.3 L875.3 838.3 L876.5 549.6 H879.5 L879.9 545.6 L880.3 549.6 L880.9 836.3 L881.9 838.9H930.3 L931.3 841.3 L932 838.3 L933.2 549.6 H936.2 L936.6 545.6 L937 549.6 L937.6 836.3 L938.6 838.9H979 L980 841.3 L980.7 838.3 L981.9 549.6 H985.5 L985.9 545.6 L986.3 549.6 L986.9 836.3 L987.9 838.9H1022.4 L1023.4 841.3 L1024.1 838.3 L1025.3 549.6 H1029.2 L1029.6 545.6 L1030 549.6 L1030.6 836.3 L1031.6 838.9H1061.8 L1062.8 841.3 L1063.5 838.3 L1064.7 549.6 H1068.9 L1069.3 545.6 L1069.7 549.6 L1070.3 836.3 L1071.3 838.9H1099 L1100 841.3 L1100.7 838.3 L1101.9 549.6 H1106.2 L1106.6 545.6 L1107 549.6 L1107.6 836.3 L1108.6 838.9H1133.3 L1134.3 841.3 L1135 838.3 L1136.2 549.6 H1140.7 L1141.1 545.6 L1141.5 549.6 L1142.1 836.3 L1143.1 838.9H1165.5 L1166.5 841.3 L1167.2 838.3 L1168.4 549.6 H1173.2 L1173.6 545.6 L1174 549.6 L1174.6 836.3 L1175.6 838.9H1197.4 L1198.4 841.3 L1199.1 838.3 L1200.3 549.6 H1205.5 L1205.9 545.6 L1206.3 549.6 L1206.9 836.3 L1207.9 838.9H1228 L1228.800 841.3 L1229.700 838.3 L1230.500 549.6" fill="none" stroke="#111" stroke-width="1.25" stroke-linejoin="round"/>
<path d="M440.300 552V837M444.500 552V837" stroke="#cdcda0" stroke-width="2.200" stroke-dasharray="2 3" fill="none"/>
<path d="M439.700 784V840" stroke="#111" stroke-width="1.300" fill="none"/>
<path d="M320.500 662.800 C330 676 340 693 348.4 703.5 Q349.7 709.2 351 703.5 C352.972 665.99 357.992 643 369.4 643 C392.17 644.18 417.7 678.4 438.4 702 Q439.7 707.7 441 702 C443.5 662.816 450.5 638.8 466 638.8 C499.495 640.032 537.05 675.76 567.5 700.4 Q568.8 706.1 570.1 700.4 C573.296 660.038 582.906 635.3 603.8 635.3 C637.394 636.614 675.06 674.72 705.6 701 Q706.9 706.7 708.2 701 C710.644 663.366 717.434 640.3 732.5 640.3 C755.996 641.546 782.34 677.68 803.7 702.6 Q805 708.3 806.3 702.6 C808.2 666.702 812.95 644.7 823.8 644.7 C840.663 645.906 859.57 680.88 874.9 705 Q876.2 710.7 877.5 705 C879.224 669.536 883.314 647.8 892.8 647.8 C905.571 648.96 919.89 682.6 931.5 705.8 Q932.8 711.5 934.1 705.8 C935.776 671.39 939.686 650.3 948.8 650.3 C959.162 651.41 970.78 683.6 980.2 705.8 Q981.5 711.5 982.8 705.8 C984.436 672.754 988.196 652.5 997 652.5 C1005.91 653.602 1015.9 685.56 1024 707.6 Q1025.3 713.3 1026.6 707.6 C1028.12 674.244 1031.46 653.8 1039.4 653.8 C1047.42 654.89 1056.41 686.5 1063.7 708.3 Q1065 714 1066.3 708.3 C1067.77 675.626 1070.9 655.6 1078.4 655.6 C1085.73 656.684 1093.94 688.12 1100.6 709.8 Q1101.9 715.5 1103.2 709.8 C1104.6 676.816 1107.46 656.6 1114.4 656.6 C1121.2 657.684 1128.82 689.12 1135 710.8 Q1136.3 716.5 1137.6 710.8 C1139 678.064 1141.86 658 1148.8 658 C1155.04 659.08 1162.03 690.4 1167.7 712 Q1169 717.7 1170.3 712 C1171.7 679.14 1174.59 659 1181.6 659 C1187.57 660.08 1194.27 691.4 1199.7 713 Q1201 718.7 1202.3 713 C1203.64 680.14 1206.29 660 1212.8 660 C1218.81 661.14 1225.54 694.2 1231 717" fill="none" stroke="#ee22ee" stroke-width="1.300"/>
<path d="M320.500 732 Q334 746 349 758 L350.5 753 L354.7 724.4 Q396.75 760.8 438.8 784 L439.700 784 L439.700 727 L440.300 784 L444.4 752.5 Q506.1 786.85 567.8 806 L569.3 801 L573.4 774.4 Q639.7 793.95 706 807.5 L707.5 802.5 L711.3 773 Q757.55 785.85 803.8 794.7 L805.3 789.7 L809.4 757.5 Q842.35 768.5 875.3 777.5 L876.8 772.5 L881 737 Q906.45 748.5 931.9 758.8 L933.4 753.8 L937.5 718 Q959.05 728.7 980.6 739.4 L982.1 734.4 L987 697 Q1005.4 708.35 1023.8 719.7 L1025.3 714.7 L1031.5 676 Q1047.45 688.5 1063.4 701 L1064.9 696 L1070.6 655.6 Q1085.45 668.8 1100.3 682 L1101.8 677 L1107.5 635.6 Q1121.1 649.2 1134.7 662.8 L1136.2 657.8 L1141.9 613.8 Q1154.4 628.9 1166.9 644 L1168.4 639 L1174.4 594 Q1186.6 609.2 1198.8 624.4 L1200.3 619.4 L1206.9 573.8 Q1217.95 590.2 1229 606.6 L1230.500 596" fill="none" stroke="#1212c0" stroke-width="1.300" stroke-linejoin="round"/>
<polyline points="320.5,802.5 349,807 358,808 439.7,817.5 448,818.5 568.8,826.9 630,827.8 706,831.3 716,831 805,829 812,828.5 876.2,826 932.5,821 981,817 1024,812 1063.8,807 1101,802.5 1135.3,797 1167.5,792.5 1199.4,787 1230.5,781.5" fill="none" stroke="#e62020" stroke-width="1.200"/>
<path d="M320.500 752.500H1230.500" stroke="#38388a" stroke-width="1" stroke-dasharray="3 2" fill="none" opacity=".85"/>
<path d="M320.500 781.500H1230.500" stroke="#1a1ad0" stroke-width="1.200" stroke-dasharray="3 2" fill="none"/>
<path d="M440.500 499V549M444.500 499V549M440.500 839V903.500M444.500 839V903.500" stroke="#1616a8" stroke-width="1.100" stroke-dasharray="3 2" fill="none"/>
<path d="M435.500 484.500H444.500V494L440.500 499.500L435.500 494Z" fill="#ccccd8" stroke="#1a1ab0" stroke-width="1.100"/>
<path d="M440.500 484.500H449.500V494L444.500 499.500L440.500 494.500Z" fill="none" stroke="#d02828" stroke-width="1.100"/>
<text x="437" y="494" font-size="9" fill="#111">1</text><text x="441.500" y="494.500" font-size="9" fill="#111">2</text>
<path d="M1236.500 699L1233.500 701.500L1236.500 704" fill="none" stroke="#555" stroke-width="1"/><text x="1240" y="705.500" fill="#1c1c1c">0</text>
</svg>
<div class="a" style="left:0;top:994px;width:1280px;height:30px;background:linear-gradient(#3168d5 0,#4993e6 2px,#2b71e0 4px,#245edc 9px,#2157d7 22px,#1d4fc0 30px)"></div>
<div class="a" style="left:0;top:994px;width:98px;height:30px;border-radius:0 12px 12px 0;background:linear-gradient(#3f8f3f 0,#62b862 2px,#429e42 6px,#3a963a 20px,#2f7c2f 30px);box-shadow:inset -6px 0 6px -2px #256225"></div>
<svg class="a" style="left:9px;top:997px" width="23" height="25" viewBox="0 0 20 22"><path d="M2 4Q5 2 8.500 4L7.500 10Q4.500 8 1 10Z" fill="#e8542c"/><path d="M10 4.500Q13.500 6.500 17 4.500L16 10.500Q12.500 12.500 9 10.500Z" fill="#78c040"/><path d="M0.800 11.500Q4 9.500 7.300 11.500L6.300 17.500Q3 15.500 0 17.500Z" fill="#4a90e8"/><path d="M8.800 12Q12 14 15.800 12L14.800 18Q11.500 20 7.800 18Z" fill="#f5c030"/></svg>
<div class="t" style="left:35px;top:998px;color:#fff;font-size:19px;font-weight:bold;font-style:italic;line-height:22px;height:22px;text-shadow:1px 1px 1px #1d4f1d;letter-spacing:-0.3px">Start</div>
<div class="tk" style="left:109px;width:158px;background:#1e52b7;box-shadow:inset 1px 1px 1px #143a8c"><svg class="a" style="left:10px;top:3px" width="16" height="16" viewBox="0 0 16 16"><rect width="16" height="16" fill="#fbd5f3"/><rect x="1" y="1" width="14" height="14" fill="#fff"/><path d="M3 3H9M5 3V11M3 6H8M7 6V11H12" stroke="#7a1212" stroke-width="1.600" fill="none"/><circle cx="11.500" cy="4.500" r="2.300" fill="#e02020"/><circle cx="11.500" cy="11.500" r="2.300" fill="#1030c0"/><circle cx="4.500" cy="12" r="2" fill="#20a030"/></svg><span style="letter-spacing:-0.2px">CircuitMaker</span></div>
<div class="tk" style="left:269px;width:158px;background:linear-gradient(#4d8ff0,#3c81f3 20%,#3479ea);box-shadow:inset 1px 1px 0 #6fa6f8"><svg class="a" style="left:9px;top:3px" width="16" height="16" viewBox="0 0 16 16"><rect x="1" y="1" width="14" height="14" rx="1" fill="#101070"/><rect x="4" y="1" width="8" height="5" fill="#fff"/><rect x="2.500" y="8" width="11" height="2" fill="#e03030"/><rect x="2.500" y="10" width="11" height="2" fill="#fff"/><rect x="2.500" y="12" width="11" height="2" fill="#e03030"/></svg><span>Total Commander 6.5...</span></div>
<div class="tk" style="left:429px;width:158px;background:linear-gradient(#4d8ff0,#3c81f3 20%,#3479ea);box-shadow:inset 1px 1px 0 #6fa6f8"><svg class="a" style="left:10px;top:3px" width="16" height="16" viewBox="0 0 16 16"><rect x=".5" y=".5" width="15" height="15" fill="#fff" stroke="#c03020"/><rect x="3" y="3" width="10" height="10" fill="#e8a090" stroke="#b02818"/><path d="M4 12L7 7L9 10L10.500 8L12.500 12Z" fill="#902010"/></svg><span>Microsoft Office Pictu...</span></div>
<div class="t" style="left:1098px;top:1004px;color:#fff;font-size:11px">HU</div>
<div class="a" style="left:1133px;top:994px;width:147px;height:30px;background:linear-gradient(#1a8fe8 0,#3bb3f5 2px,#14a0ee 5px,#0f9ded 20px,#0b86d6 30px);border-left:1px solid #0a5fb8;box-shadow:inset 1px 0 0 #4fc0f8"></div>
<svg class="a" style="left:1143px;top:1000px" width="96" height="18" viewBox="0 0 96 18"><path d="M3 14L9 8L13 14Z" fill="#30a040"/><path d="M5 14L10 9L12 14Z" fill="#2050d0"/><path d="M7.500 14L11 10.500L12 14Z" fill="#d02020"/><path d="M1.500 15.500H14.500" stroke="#f0f0f0" stroke-width="1.500"/><path d="M4 13.500L13.500 3L15 4.500L6 14Z" fill="#202060" stroke="#101030" stroke-width=".6"/><path d="M26.500 3Q29.500 4.500 32 3V9Q32 13.500 26.500 16Q21 13.500 21 9V3Q23.500 4.500 26.500 3Z" fill="#d82028" stroke="#f4d0d0" stroke-width=".9"/><path d="M24.300 7L28.700 11.400M28.700 7L24.300 11.400" stroke="#fff" stroke-width="1.600"/><path d="M38.500 7H41L45.500 2.500V15.500L41 11H38.500Z" fill="#e88848" stroke="#803010" stroke-width=".8"/><path d="M47.500 4V14M50 2.500V15.500" fill="none" stroke="#181818" stroke-width="1.200"/><path d="M58 4L62.500 1L67 4V14L62.500 17L58 14Z" fill="#1428c8"/><path d="M60.500 6L64.500 11.500L62.500 13.500V4.500L64.500 6.500L60.500 12" fill="none" stroke="#e01818" stroke-width="1.300"/><circle cx="79" cy="7" r="5.500" fill="#a8a8a0" stroke="#505048" stroke-width=".8"/><circle cx="78" cy="6" r="2.300" fill="#e8e8e0"/><circle cx="79.500" cy="7.500" r="1.800" fill="#585850"/><path d="M82 13L88 8" stroke="#9ab8f0" stroke-width="1.600"/></svg>
<div class="t" style="left:1239px;top:1004px;color:#fff;font-size:11px;letter-spacing:0.35px">11:12</div>
</body></html>
